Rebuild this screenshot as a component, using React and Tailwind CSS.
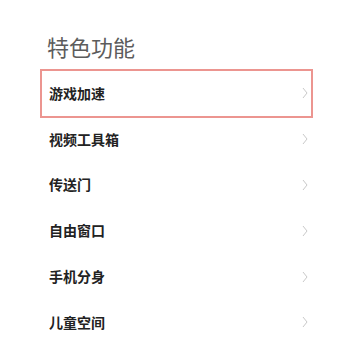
const items = ['游戏加速', '视频工具箱', '传送门', '自由窗口', '手机分身', '儿童空间'];

function Chevron() {
  return (
    <svg width="6" height="12" viewBox="0 0 6 12" fill="none" className="shrink-0">
      <path d="M1 1 L5 6 L1 11" stroke="#c9c9c9" strokeWidth="1" strokeLinejoin="round" />
    </svg>
  );
}

export default function App() {
  return (
    <div
      className="w-[339px] h-[348px] bg-white overflow-hidden"
      style={{ fontFamily: '"Noto Sans CJK SC", "Noto Sans", sans-serif' }}
    >
      <div className="pl-[47px] pt-[35px] text-[22px] leading-[22px] text-[#5c5c5c] mb-[13.5px]">
        特色功能
      </div>
      <ul className="ml-[42px] w-[269px]">
        {items.map((label, i) => (
          <li
            key={label}
            className={`h-[45.8px] flex items-center justify-between pl-[7px] pr-[3px] ${
              i === 0 ? 'outline-2 outline-[#ec9590]' : ''
            }`}
          >
            <span className="text-[14px] font-bold text-[#222]">{label}</span>
            <Chevron />
          </li>
        ))}
      </ul>
    </div>
  );
}
